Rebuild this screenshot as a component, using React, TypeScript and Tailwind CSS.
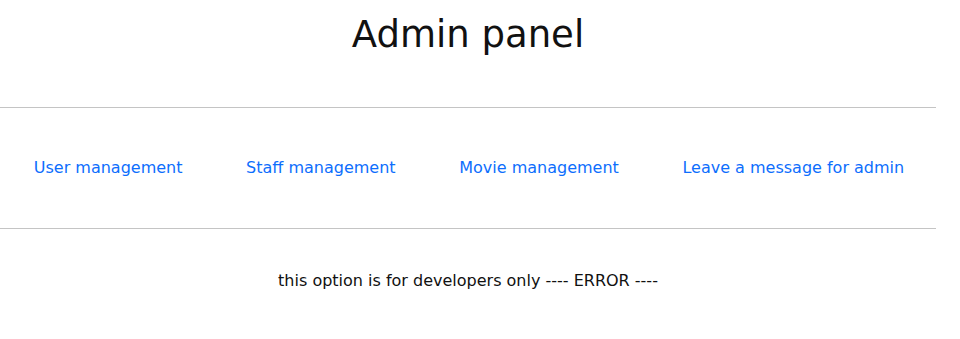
const links = [
  "User management",
  "Staff management",
  "Movie management",
  "Leave a message for admin",
];

export default function App() {
  return (
    <div className="min-h-[339px] bg-white font-['DejaVu_Sans',sans-serif] text-[#111]">
      <div className="w-[936px]">
        <h1 className="pt-[13px] text-center text-[37px] leading-[1.2]">Admin panel</h1>

        <hr className="mt-[50px] border-t border-[#c4c4c4]" />

        <nav className="flex justify-around py-[48px] pl-[2px]">
          {links.map((label) => (
            <a key={label} href="#" className="text-base leading-6 text-[#0d6efd]">
              {label}
            </a>
          ))}
        </nav>

        <hr className="border-t border-[#c4c4c4]" />

        <p className="mt-[40px] text-center text-base leading-6">
          this option is for developers only ---- ERROR ----
        </p>
      </div>
    </div>
  );
}
